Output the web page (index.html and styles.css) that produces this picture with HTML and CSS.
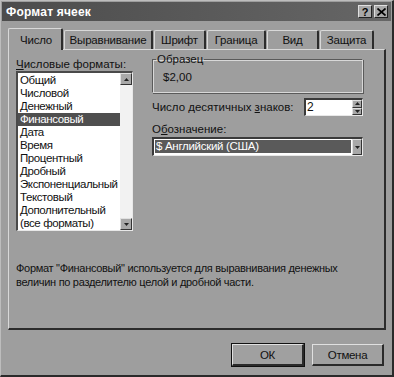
FILE: index.html
```html
<!DOCTYPE html>
<html lang="ru">
<head>
  <meta charset="UTF-8" />
  <title>Формат ячеек</title>
  <link rel="stylesheet" href="styles.css">
</head>
<body>
  <div class="window">
    <div class="titlebar">
      <span class="title">Формат ячеек</span>
      <div class="caption-buttons">
        <span class="cap-btn">?</span>
        <span class="cap-btn cap-close">
          <svg width="9" height="8" viewBox="0 0 9 8"><path d="M0.5 0.5 L8.5 7.5 M8.5 0.5 L0.5 7.5" stroke="#000" stroke-width="1.7" fill="none"/></svg>
        </span>
      </div>
    </div>

    <div class="content">
      <div class="tabs">
        <div class="tab active">Число</div>
        <div class="tab">Выравнивание</div>
        <div class="tab">Шрифт</div>
        <div class="tab">Граница</div>
        <div class="tab">Вид</div>
        <div class="tab">Защита</div>
      </div>

      <div class="panel">
        <div class="panel-top">
          <div class="formats">
            <div class="label"><u>Ч</u>исловые форматы:</div>
            <div class="listbox">
              <ul class="items">
                <li>Общий</li>
                <li>Числовой</li>
                <li>Денежный</li>
                <li class="selected">Финансовый</li>
                <li>Дата</li>
                <li>Время</li>
                <li>Процентный</li>
                <li>Дробный</li>
                <li>Экспоненциальный</li>
                <li>Текстовый</li>
                <li>Дополнительный</li>
                <li>(все форматы)</li>
              </ul>
              <div class="scrollbar">
                <span class="arrow-btn"><svg width="5" height="3" viewBox="0 0 5 3"><path d="M0 3 L2.5 0 L5 3 Z" fill="#222"/></svg></span>
                <span class="arrow-btn"><svg width="5" height="3" viewBox="0 0 5 3"><path d="M0 0 L2.5 3 L5 0 Z" fill="#222"/></svg></span>
              </div>
            </div>
          </div>

          <div class="options">
            <fieldset class="sample">
              <legend>Образец</legend>
              <div class="sample-value">$2,00</div>
            </fieldset>

            <div class="decimals">
              <span>Число десятичных <u>з</u>наков:</span>
              <div class="spin">
                <span class="spin-value">2</span>
                <div class="spin-buttons">
                  <span class="spin-btn"><svg width="5" height="3" viewBox="0 0 5 3"><path d="M0 3 L2.5 0 L5 3 Z" fill="#222"/></svg></span>
                  <span class="spin-btn"><svg width="5" height="3" viewBox="0 0 5 3"><path d="M0 0 L2.5 3 L5 0 Z" fill="#222"/></svg></span>
                </div>
              </div>
            </div>

            <div class="label symbol-label">О<u>б</u>означение:</div>
            <div class="combo">
              <span class="combo-value">$ Английский (США)</span>
              <span class="combo-btn"><svg width="5" height="3" viewBox="0 0 5 3"><path d="M0 0 L2.5 3 L5 0 Z" fill="#222"/></svg></span>
            </div>
          </div>
        </div>

        <p class="description">Формат "Финансовый" используется для выравнивания денежных величин по разделителю целой и дробной части.</p>
      </div>

      <div class="buttons">
        <button class="btn default">ОК</button>
        <button class="btn">Отмена</button>
      </div>
    </div>
  </div>
</body>
</html>
```

FILE: styles.css
```css
body {
  margin: 0;
  background-color: #9e9e9e;
  font-family: "Liberation Sans", Arial, sans-serif;
  font-size: 11.5px;
  color: #111;
}
.window {
  width: 394px;
  height: 377px;
  box-sizing: border-box;
  background-color: #9e9e9e;
  border-top: 1px solid #bdbdbd;
  border-left: 1px solid #bdbdbd;
  border-right: 2px solid #2a2a2a;
  border-bottom: 2px solid #2a2a2a;
  padding: 1px;
}
.titlebar {
  height: 19px;
  background: linear-gradient(to right, #4c4c4c, #666);
  display: flex;
  align-items: center;
  justify-content: space-between;
  padding: 0 3px 0 4px;
}
.title {
  color: #fff;
  font-weight: bold;
  font-size: 12px;
  letter-spacing: 0.2px;
}
.caption-buttons {
  display: flex;
  gap: 2px;
}
.cap-btn {
  width: 14px;
  height: 13px;
  box-sizing: border-box;
  background-color: #a8a8a8;
  border-top: 1px solid #e0e0e0;
  border-left: 1px solid #e0e0e0;
  border-right: 1px solid #222;
  border-bottom: 1px solid #222;
  display: flex;
  align-items: center;
  justify-content: center;
  font-weight: bold;
  font-size: 11px;
  color: #000;
}
.content {
  padding: 7px 6px 0 6px;
}
.tabs {
  display: flex;
  align-items: flex-end;
  height: 21px;
  padding-left: 1px;
  letter-spacing: -0.2px;
}
.tab {
  height: 19px;
  box-sizing: border-box;
  border-top: 1px solid #d8d8d8;
  border-left: 1px solid #d8d8d8;
  border-right: 2px solid #2c2c2c;
  border-radius: 2px 2px 0 0;
  display: flex;
  align-items: center;
  justify-content: center;
  margin-right: 1px;
  white-space: nowrap;
}
.tab.active {
  width: 55px;
  height: 22px;
  margin-left: -1px;
  margin-bottom: -1px;
  padding-left: 2px;
  position: relative;
  z-index: 1;
  background-color: #9e9e9e;
}
.tab:nth-child(2) { width: 89px; }
.tab:nth-child(3) { width: 52px; }
.tab:nth-child(4) { width: 59px; }
.tab:nth-child(5) { width: 52px; }
.tab:nth-child(6) { width: 54px; }
.panel {
  width: 378px;
  height: 281px;
  box-sizing: border-box;
  border-top: 1px solid #d8d8d8;
  border-left: 1px solid #d8d8d8;
  border-right: 2px solid #2c2c2c;
  border-bottom: 2px solid #2c2c2c;
  padding: 7px 7px 0 7px;
}
.panel-top {
  display: flex;
  gap: 19px;
}
.label {
  height: 14px;
  line-height: 14px;
}
.label u, .decimals u {
  text-decoration-thickness: 1px;
  text-underline-offset: 1px;
}
.listbox {
  width: 117px;
  height: 160px;
  box-sizing: border-box;
  background-color: #fff;
  border-top: 2px solid #4a4a4a;
  border-left: 2px solid #4a4a4a;
  border-right: 1px solid #e8e8e8;
  border-bottom: 1px solid #e8e8e8;
  display: flex;
}
.items {
  list-style: none;
  margin: 0;
  padding: 1px 0 0 0;
  flex: 1;
}
.items li {
  height: 13px;
  line-height: 13px;
  padding-left: 2px;
  white-space: nowrap;
  letter-spacing: -0.4px;
}
.items li.selected {
  background-color: #4f4f4f;
  color: #fff;
}
.scrollbar {
  width: 12px;
  background-color: #f2f2f2;
  display: flex;
  flex-direction: column;
  justify-content: space-between;
}
.arrow-btn, .spin-btn, .combo-btn {
  box-sizing: border-box;
  background-color: #a8a8a8;
  border-top: 1px solid #e0e0e0;
  border-left: 1px solid #e0e0e0;
  border-right: 1px solid #333;
  border-bottom: 1px solid #333;
  display: flex;
  align-items: center;
  justify-content: center;
}
.arrow-btn {
  height: 12px;
}
.options {
  width: 211px;
}
.sample {
  margin: -4px 0 0 0;
  padding: 5px 0 0 10px;
  height: 40px;
  box-sizing: border-box;
  border: none;
  border-top: 1px solid #5a5a5a;
  border-left: 1px solid #5a5a5a;
  border-right: 1px solid #d8d8d8;
  border-bottom: 1px solid #d8d8d8;
  box-shadow: inset 1px 1px 0 #d8d8d8, 1px 1px 0 #5a5a5a;
}
.sample legend {
  padding: 0 1px;
  margin-left: -7px;
  line-height: 13px;
}
.sample-value {
  line-height: 13px;
}
.decimals {
  margin-top: 5px;
  display: flex;
  align-items: center;
  justify-content: space-between;
}
.spin {
  width: 59px;
  height: 18px;
  box-sizing: border-box;
  background-color: #fff;
  border-top: 2px solid #3a3a3a;
  border-left: 2px solid #3a3a3a;
  border-right: 1px solid #e8e8e8;
  border-bottom: 1px solid #e8e8e8;
  display: flex;
  justify-content: space-between;
}
.spin-value {
  padding-left: 1px;
  line-height: 15px;
  font-size: 12px;
}
.spin-buttons {
  width: 10px;
  display: flex;
  flex-direction: column;
}
.spin-btn {
  flex: 1;
}
.symbol-label {
  margin-top: 6px;
}
.combo {
  margin-top: 1px;
  width: 211px;
  height: 19px;
  box-sizing: border-box;
  background-color: #fff;
  border-top: 2px solid #3a3a3a;
  border-left: 2px solid #3a3a3a;
  border-right: 1px solid #e8e8e8;
  border-bottom: 1px solid #e8e8e8;
  display: flex;
  padding: 1px 0 2px 1px;
  gap: 1px;
}
.combo-value {
  flex: 1;
  background-color: #5a5a5a;
  color: #fff;
  line-height: 13px;
  padding-left: 1px;
  letter-spacing: -0.3px;
}
.combo-btn {
  width: 10px;
  margin-top: -1px;
  margin-bottom: -2px;
}
.description {
  margin: 30px 0 0 0;
  line-height: 14px;
  width: 340px;
  font-size: 11px;
  letter-spacing: -0.3px;
}
.buttons {
  display: flex;
  justify-content: flex-end;
  gap: 8px;
  margin-top: 14px;
  padding-right: 1px;
}
.btn {
  width: 72px;
  height: 22px;
  box-sizing: border-box;
  background-color: #a0a0a0;
  font-family: "Liberation Sans", Arial, sans-serif;
  font-size: 11.5px;
  letter-spacing: -0.3px;
  color: #111;
  border-top: 1px solid #e0e0e0;
  border-left: 1px solid #e0e0e0;
  border-right: 2px solid #2a2a2a;
  border-bottom: 2px solid #2a2a2a;
  padding: 0;
}
.btn.default {
  outline: 1px solid #111;
}
```
